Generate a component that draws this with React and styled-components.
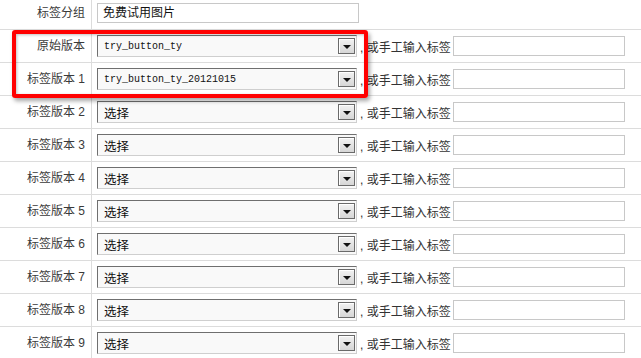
import React from 'react';
import styled, { createGlobalStyle } from 'styled-components';

const GlobalStyle = createGlobalStyle`
  html, body {
    margin: 0;
    padding: 0;
    background: #fff;
    overflow: hidden;
  }
  body {
    font-family: "Liberation Sans", "Noto Sans CJK SC", sans-serif;
    font-size: 12px;
    color: #333;
  }
`;

const Form = styled.div`
  position: relative;
  width: 641px;
  margin-top: -3px;
`;

const Row = styled.div`
  display: flex;
  height: 32px;
  border-bottom: 1px solid #dcdcdc;
`;

const Label = styled.div`
  box-sizing: border-box;
  width: 92px;
  flex: none;
  border-right: 1px solid #dcdcdc;
  padding-right: 6px;
  text-align: right;
  line-height: 32px;
  color: #3a3a3a;
  white-space: nowrap;
`;

const Field = styled.div`
  display: flex;
  align-items: center;
  padding-left: 5px;
`;

const TextInput = styled.div`
  box-sizing: border-box;
  width: ${({ $w }) => $w}px;
  height: 20px;
  border: 1px solid #c8c8c8;
  padding-left: 5px;
  line-height: 18px;
  font-size: 12px;
  color: #111;
  background: #fff;
`;

const SelectBox = styled.div`
  box-sizing: border-box;
  width: 260px;
  height: 22px;
  display: flex;
  align-items: center;
  justify-content: space-between;
  border-top: 1px solid #6f6f6f;
  border-left: 1px solid #6f6f6f;
  border-bottom: 1px solid #cfcfcf;
  border-right: 1px solid #cfcfcf;
  background: #f9f9f9;
  padding: 0 1px 0 6px;
`;

const SelectValue = styled.span`
  color: #111;
  font-size: ${({ $mono }) => ($mono ? '10px' : '12.5px')};
  font-family: ${({ $mono }) =>
    $mono ? '"Liberation Mono", monospace' : '"Liberation Sans", "Noto Sans CJK SC", sans-serif'};
`;

const ArrowButton = styled.span`
  box-sizing: border-box;
  width: 17px;
  height: 16px;
  border: 1px solid #6a6a6a;
  background: linear-gradient(#f2f2f2, #d6d6d6);
  box-shadow: inset 1px 1px 0 #fff;
  display: flex;
  align-items: center;
  justify-content: center;

  &::after {
    content: '';
    width: 0;
    height: 0;
    margin-top: 2px;
    border-left: 4px solid transparent;
    border-right: 4px solid transparent;
    border-top: 4px solid #111;
  }
`;

const Hint = styled.span`
  margin: 0 2px 0 3px;
  color: #333;
  white-space: nowrap;
`;

const Highlight = styled.div`
  position: absolute;
  left: 12px;
  top: 33px;
  width: 356px;
  height: 68px;
  box-sizing: border-box;
  border: 4px solid #f00;
  border-radius: 3px;
  box-shadow: 2px 3px 4px rgba(0, 0, 0, 0.35), inset 1px 1px 3px rgba(0, 0, 0, 0.25);
  pointer-events: none;
`;

const versions = [
  { label: '原始版本', value: 'try_button_ty', mono: true },
  { label: '标签版本 1', value: 'try_button_ty_20121015', mono: true },
  ...[2, 3, 4, 5, 6, 7, 8, 9].map((n) => ({ label: `标签版本 ${n}`, value: '选择' })),
];

const App = () => (
  <>
    <GlobalStyle />
    <Form>
      <Row>
        <Label>标签分组</Label>
        <Field>
          <TextInput $w={262}>免费试用图片</TextInput>
        </Field>
      </Row>
      {versions.map((v) => (
        <Row key={v.label}>
          <Label>{v.label}</Label>
          <Field>
            <SelectBox>
              <SelectValue $mono={v.mono}>{v.value}</SelectValue>
              <ArrowButton />
            </SelectBox>
            <Hint>, 或手工输入标签</Hint>
            <TextInput $w={172} />
          </Field>
        </Row>
      ))}
      <Highlight />
    </Form>
  </>
);

export default App;
